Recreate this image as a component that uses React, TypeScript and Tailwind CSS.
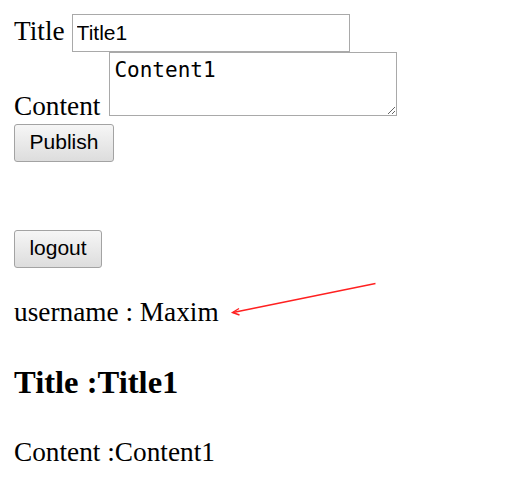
const btn =
  'h-[38px] rounded-[3px] border border-[#a3a3a3] bg-gradient-to-b from-[#f6f6f6] to-[#dddddd] pb-[3px] text-[21px] text-black font-["Liberation_Sans",Arial,sans-serif] leading-none';

const App = () => {
  return (
    <div className="relative min-h-[478px] bg-white px-[14px] pt-[14px] text-black font-['Liberation_Serif','Times_New_Roman',serif] text-[27.3px]">
      <div className="flex items-baseline">
        <span className="leading-[30px]">Title</span>
        <input
          defaultValue="Title1"
          className="ml-[7px] h-[38px] w-[278px] border border-[#a9a9a9] px-[4px] py-0 text-[21px] font-['Liberation_Sans',Arial,sans-serif] outline-none"
        />
      </div>
      <div className="flex items-end">
        <span className="leading-[20px]">Content</span>
        <textarea
          defaultValue="Content1"
          className="ml-[9px] h-[64px] w-[288px] border border-[#a9a9a9] px-[4px] pt-[5px] text-[21px] leading-[24px] font-['DejaVu_Sans_Mono','Liberation_Mono',monospace] outline-none"
        />
      </div>
      <button className={`${btn} mt-[8px] w-[100px] block`}>Publish</button>
      <button className={`${btn} mt-[68px] h-[37px] w-[88px] block`}>logout</button>
      <p className="mt-[29px] leading-[30px]">username : Maxim</p>
      <h3 className="mt-[37px] text-[32.6px] font-bold leading-[36px]">Title :Title1</h3>
      <p className="mt-[37px] leading-[30px]">Content :Content1</p>

      <svg
        className="pointer-events-none absolute left-0 top-0"
        width="511"
        height="478"
        viewBox="0 0 511 478"
      >
        <line x1="375.5" y1="283.5" x2="233" y2="312.5" stroke="#ff2020" strokeWidth="1.4" />
        <path d="M239 308.5 L232.5 312.5 L239.5 315" fill="none" stroke="#ff2020" strokeWidth="1.4" />
      </svg>
    </div>
  );
};

export default App;
